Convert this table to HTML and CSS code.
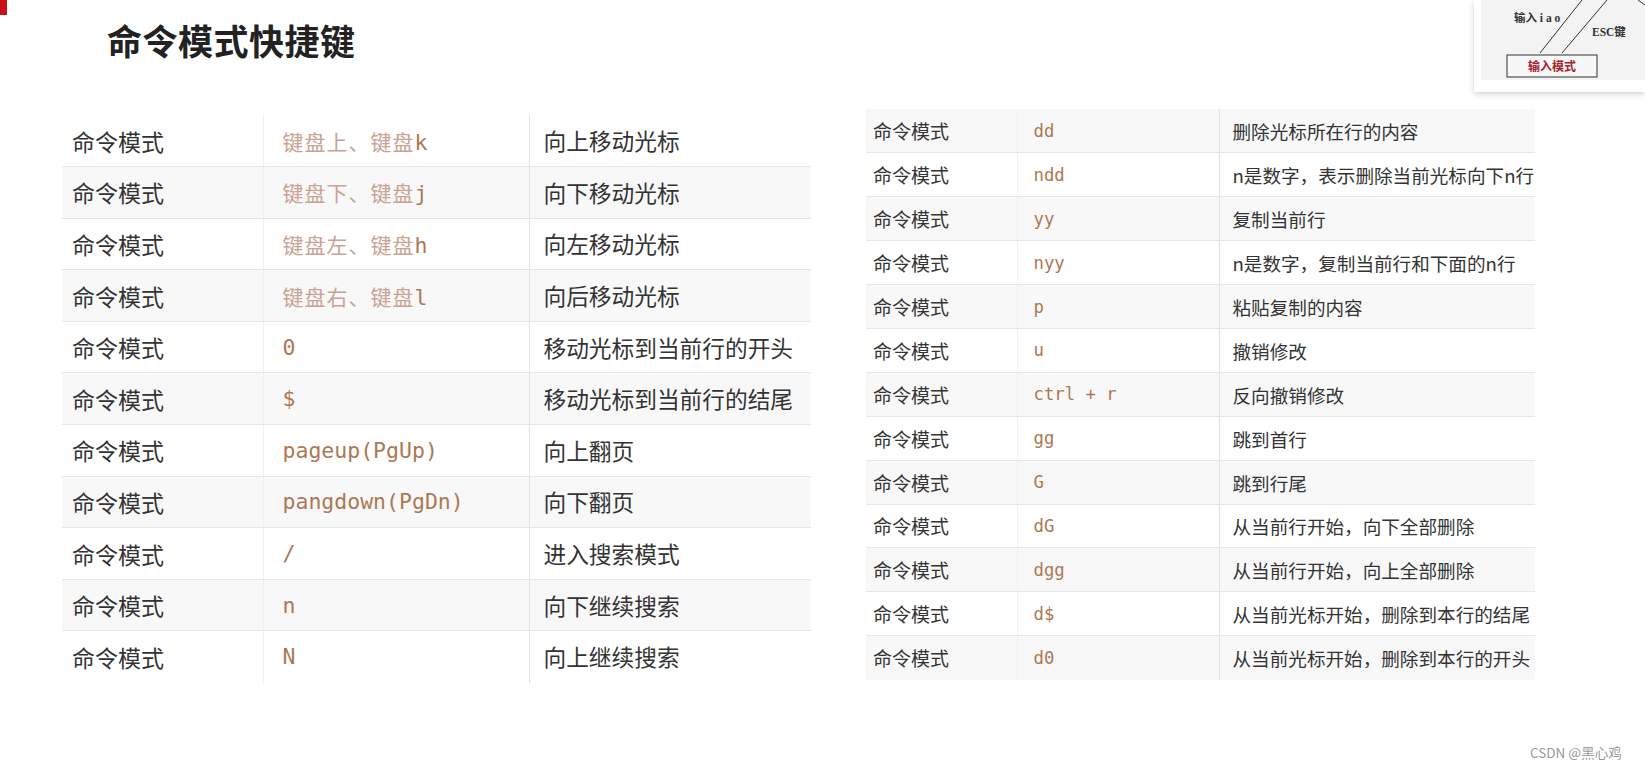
FILE: index.html
```html
<!DOCTYPE html>
<html lang="zh-CN">
<head>
<meta charset="utf-8">
<title>命令模式快捷键</title>
<link rel="stylesheet" href="styles.css">
</head>
<body>
<div class="page">
  <div class="corner-mark"></div>
  <h1 class="title">命令模式快捷键</h1>

  <div class="diagram">
    <svg width="171" height="92" viewBox="0 0 171 92" xmlns="http://www.w3.org/2000/svg">
      <rect x="0" y="0" width="171" height="86" fill="#ffffff"/>
      <rect x="7" y="0" width="164" height="80" fill="#f3f3f3"/>
      <line x1="66" y1="53" x2="108" y2="0" stroke="#333" stroke-width="1"/>
      <line x1="88" y1="53" x2="133" y2="0" stroke="#333" stroke-width="1"/>
      <line x1="164" y1="0" x2="171" y2="5" stroke="#333" stroke-width="1"/>
      <rect x="33" y="55" width="90" height="22" fill="#f7f7f7" stroke="#333" stroke-width="1"/>
      <text x="40" y="22" class="dg-label">输入 i a o</text>
      <text x="118" y="36" class="dg-label">ESC键</text>
      <text x="78" y="71" class="dg-box" text-anchor="middle">输入模式</text>
    </svg>
  </div>

  <div class="tables">
    <table class="tbl tbl-left">
      <tr><td class="c1">命令模式</td><td class="c2"><span class="cjk">键盘上、键盘</span>k</td><td class="c3">向上移动光标</td></tr>
      <tr><td class="c1">命令模式</td><td class="c2"><span class="cjk">键盘下、键盘</span>j</td><td class="c3">向下移动光标</td></tr>
      <tr><td class="c1">命令模式</td><td class="c2"><span class="cjk">键盘左、键盘</span>h</td><td class="c3">向左移动光标</td></tr>
      <tr><td class="c1">命令模式</td><td class="c2"><span class="cjk">键盘右、键盘</span>l</td><td class="c3">向后移动光标</td></tr>
      <tr><td class="c1">命令模式</td><td class="c2">0</td><td class="c3">移动光标到当前行的开头</td></tr>
      <tr><td class="c1">命令模式</td><td class="c2">$</td><td class="c3">移动光标到当前行的结尾</td></tr>
      <tr><td class="c1">命令模式</td><td class="c2">pageup(PgUp)</td><td class="c3">向上翻页</td></tr>
      <tr><td class="c1">命令模式</td><td class="c2">pangdown(PgDn)</td><td class="c3">向下翻页</td></tr>
      <tr><td class="c1">命令模式</td><td class="c2">/</td><td class="c3">进入搜索模式</td></tr>
      <tr><td class="c1">命令模式</td><td class="c2">n</td><td class="c3">向下继续搜索</td></tr>
      <tr><td class="c1">命令模式</td><td class="c2">N</td><td class="c3">向上继续搜索</td></tr>
    </table>

    <table class="tbl tbl-right">
      <tr><td class="c1">命令模式</td><td class="c2">dd</td><td class="c3">删除光标所在行的内容</td></tr>
      <tr><td class="c1">命令模式</td><td class="c2">ndd</td><td class="c3">n是数字，表示删除当前光标向下n行</td></tr>
      <tr><td class="c1">命令模式</td><td class="c2">yy</td><td class="c3">复制当前行</td></tr>
      <tr><td class="c1">命令模式</td><td class="c2">nyy</td><td class="c3">n是数字，复制当前行和下面的n行</td></tr>
      <tr><td class="c1">命令模式</td><td class="c2">p</td><td class="c3">粘贴复制的内容</td></tr>
      <tr><td class="c1">命令模式</td><td class="c2">u</td><td class="c3">撤销修改</td></tr>
      <tr><td class="c1">命令模式</td><td class="c2">ctrl + r</td><td class="c3">反向撤销修改</td></tr>
      <tr><td class="c1">命令模式</td><td class="c2">gg</td><td class="c3">跳到首行</td></tr>
      <tr><td class="c1">命令模式</td><td class="c2">G</td><td class="c3">跳到行尾</td></tr>
      <tr><td class="c1">命令模式</td><td class="c2">dG</td><td class="c3">从当前行开始，向下全部删除</td></tr>
      <tr><td class="c1">命令模式</td><td class="c2">dgg</td><td class="c3">从当前行开始，向上全部删除</td></tr>
      <tr><td class="c1">命令模式</td><td class="c2">d$</td><td class="c3">从当前光标开始，删除到本行的结尾</td></tr>
      <tr><td class="c1">命令模式</td><td class="c2">d0</td><td class="c3">从当前光标开始，删除到本行的开头</td></tr>
    </table>
  </div>

  <div class="watermark">CSDN @黑心鸡</div>
</div>
</body>
</html>
```

FILE: styles.css
```css
* { box-sizing: border-box; }

html, body {
  margin: 0;
  padding: 0;
  background: #ffffff;
}

body {
  font-family: "Noto Sans CJK SC", "Noto Sans", sans-serif;
  color: #333333;
}

.page {
  position: relative;
  width: 1645px;
  height: 769px;
  overflow: hidden;
}

.corner-mark {
  position: absolute;
  left: 0;
  top: 0;
  width: 7px;
  height: 15px;
  background: #c8101a;
}

.title {
  margin: 0;
  padding: 22px 0 0 107px;
  font-size: 35px;
  line-height: 36px;
  font-weight: 700;
  color: #222222;
  letter-spacing: 0.5px;
}

.diagram {
  position: absolute;
  top: 0;
  right: 0;
  width: 171px;
  height: 92px;
  box-shadow: 0 2px 6px rgba(0, 0, 0, 0.18);
  background: #ffffff;
}

.diagram svg { display: block; }

.dg-label {
  font-family: "Liberation Serif", "Noto Sans CJK SC", serif;
  font-size: 11.5px;
  font-weight: 700;
  fill: #333333;
}

.dg-box {
  font-family: "Noto Sans CJK SC", sans-serif;
  font-size: 12px;
  font-weight: 700;
  fill: #a3242c;
}

.tables {
  display: flex;
  align-items: flex-start;
  gap: 55px;
  padding: 51px 0 0 62px;
}

.tbl {
  border-collapse: collapse;
  table-layout: fixed;
}

.tbl td {
  padding: 0;
  white-space: nowrap;
  vertical-align: middle;
  border-bottom: 1px solid #e6e6e6;
}

.tbl tr:last-child td { border-bottom: none; }

.tbl .c2 {
  font-family: "DejaVu Sans Mono", "Noto Sans CJK SC", monospace;
  color: #ad7853;
  border-left: 1px solid #f1f1f1;
}

.tbl .c3 {
  border-left: 1px solid #e2e2e2;
}

.cjk {
  font-family: "Noto Sans CJK SC", sans-serif;
  color: #c9a394;
  letter-spacing: 1px;
}

/* left table */
.tbl-left {
  width: 749px;
  margin-top: 6px;
}

.tbl-left tr { height: 51.6px; }
.tbl-left tr:nth-child(even) { background: #f8f8f9; }

.tbl-left .c1 {
  width: 201px;
  padding-left: 10px;
  font-size: 23px;
}

.tbl-left .c2 {
  width: 266px;
  padding-left: 19px;
  font-size: 21.5px;
}

.tbl-left .cjk { font-size: 21px; }

.tbl-left .c3 {
  width: 282px;
  padding-left: 14px;
  font-size: 22.7px;
}

/* right table */
.tbl-right {
  width: 669px;
}

.tbl-right tr { height: 43.9px; }
.tbl-right tr:nth-child(odd) { background: #f8f8f9; }

.tbl-right .c1 {
  width: 151px;
  padding-left: 7px;
  font-size: 19px;
}

.tbl-right .c2 {
  width: 202px;
  padding-left: 16px;
  font-size: 17.3px;
}

.tbl-right .c3 {
  width: 316px;
  padding-left: 13px;
  font-size: 18.6px;
  letter-spacing: 0;
}

.watermark {
  position: absolute;
  left: 1530px;
  top: 744px;
  font-family: "Noto Sans CJK SC", "Liberation Sans", sans-serif;
  font-size: 13.5px;
  line-height: 16px;
  color: #9a9a9a;
}
```
